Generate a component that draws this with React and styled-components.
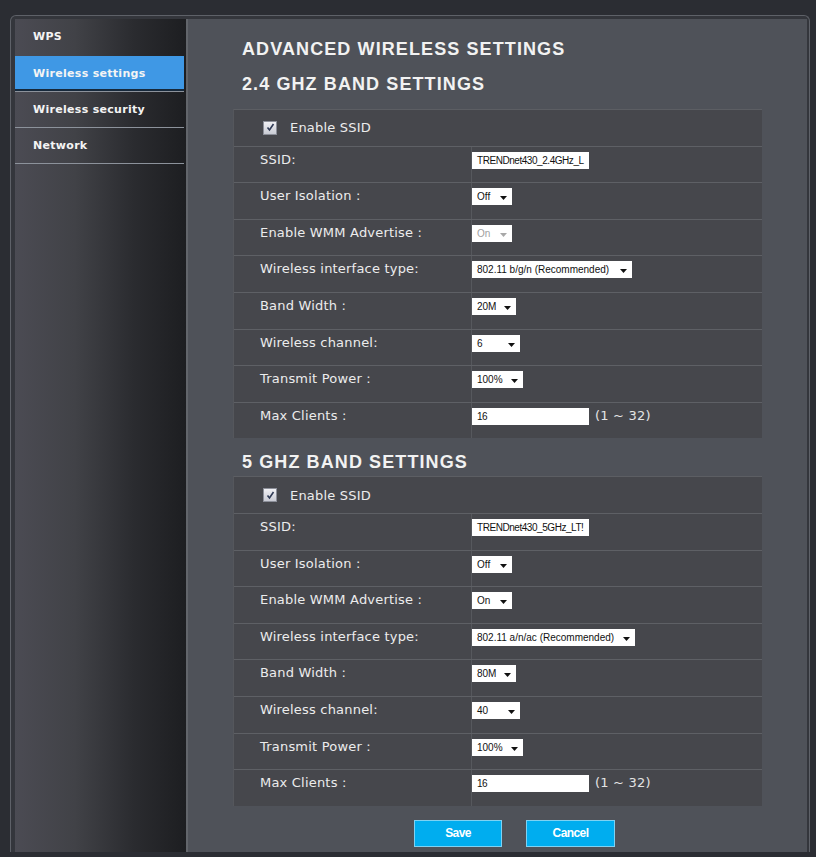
import React from 'react';
import styled, {createGlobalStyle} from "styled-components";

const GlobalStyle = createGlobalStyle`
    html, body {
        margin: 0;
        padding: 0;
        background: #2b2d33;
    }
    body {
        font-family: "DejaVu Sans", Verdana, sans-serif;
    }
`

const Page = styled.div`
    min-height: 857px;
    padding-top: 15px;
    padding-left: 10px;
    box-sizing: border-box;
`

const Frame = styled.div`
    width: 800px;
    box-sizing: border-box;
    display: flex;
    border: 1px solid #5e6168;
    border-bottom: none;
    border-radius: 6px 6px 0 0;
    padding: 3px 2px 0 4px;
    background: #34363c;
`

const Sidebar = styled.nav`
    width: 171px;
    flex-shrink: 0;
    background: linear-gradient(to right, #4b4b53 0%, #414247 35%, #2a2b2f 70%, #1d1e21 100%);
    ul {
        list-style: none;
        margin: 0;
        padding: 0;
    }
`

const SideItem = styled.li`
    display: flex;
    align-items: center;
    box-sizing: border-box;
    height: ${p => p.first ? '37px' : '36px'};
    padding: ${p => p.first ? '0 0 2px 18px' : '0 0 0 18px'};
    font-size: 11px;
    font-weight: bold;
    letter-spacing: 0.3px;
    color: #f4f4f4;
    border-bottom: ${p => p.first ? 'none' : '1px solid #8c929b'};
    margin-right: 2px;
    background: ${p => p.active ? '#3f98e5' : 'transparent'};
    box-shadow: ${p => p.active ? 'inset 0 -2px 0 #17293b' : 'none'};
`

const Main = styled.main`
    flex: 1;
    background: #4f5259;
    border-left: 2px solid #62656b;
    padding: 20px 0 5px 45px;
`

const Heading = styled.h2`
    margin: ${p => p.gap || 0}px 0 0 9px;
    font-family: "Liberation Sans", Arial, sans-serif;
    font-size: 18px;
    line-height: 20px;
    font-weight: bold;
    letter-spacing: 1.1px;
    color: #f2f2f2;
`

const Table = styled.div`
    width: 528px;
    margin-top: ${p => p.gap || 0}px;
    border-top: 1px solid #5c5e63;
    border-left: 1px solid #55575c;
    background: #46474c;
`

const Row = styled.div`
    display: grid;
    grid-template-columns: 237px 1fr;
    min-height: 35.6px;
    border-top: ${p => p.first ? 'none' : '1px solid #5e6065'};
`

const Label = styled.div`
    padding: 5px 0 0 26px;
    font-size: 13px;
    line-height: 16px;
    letter-spacing: 0.2px;
    color: #ececec;
`

const Value = styled.div`
    display: flex;
    align-items: flex-start;
    gap: 6px;
    padding: 5px 0 0 0;
    border-left: 1px solid #56585d;
`

const CheckRow = styled.label`
    grid-column: 1 / 3;
    display: flex;
    align-items: center;
    gap: 13px;
    height: 35.6px;
    padding-left: 29px;
    font-size: 13px;
    letter-spacing: 0.2px;
    color: #ececec;
`

const CheckBox = styled.span`
    width: 12px;
    height: 12px;
    border: 1px solid #8c8f99;
    background: linear-gradient(#f0f0f4, #c9cbd4);
    display: flex;
    align-items: center;
    justify-content: center;
`

const TextBox = styled.div`
    width: ${p => p.w}px;
    height: 17px;
    box-sizing: border-box;
    background: #fff;
    padding: 0 3px 0 5px;
    font-family: "Liberation Sans", Arial, sans-serif;
    font-size: 10px;
    letter-spacing: -0.45px;
    line-height: 17px;
    color: #111;
    white-space: nowrap;
`

const Dropdown = styled.div`
    width: ${p => p.w}px;
    height: 17px;
    box-sizing: border-box;
    display: flex;
    align-items: center;
    justify-content: space-between;
    padding: 0 5px 0 5px;
    background: #fff;
    font-family: "Liberation Sans", Arial, sans-serif;
    font-size: 10px;
    color: ${p => p.disabled ? '#a0a0a0' : '#111'};
    svg {
        fill: ${p => p.disabled ? '#a8a8a8' : '#111'};
        margin-top: 3px;
    }
`

const Hint = styled.span`
    font-size: 13px;
    line-height: 16px;
    letter-spacing: 0.2px;
    color: #e4e4e4;
`

const Buttons = styled.div`
    display: flex;
    gap: 24px;
    margin: 14px 0 0 181px;
`

const Button = styled.button`
    width: ${p => p.w}px;
    height: 27px;
    background: #00adef;
    border: 1px solid #7ed2f3;
    color: #fff;
    font-family: "Liberation Sans", Arial, sans-serif;
    font-size: 12px;
    font-weight: bold;
    letter-spacing: -0.6px;
    padding: 0;
`

const Caret = () => (
    <svg width="7" height="4" viewBox="0 0 7 4"><path d="M0 0h7L3.5 4z"/></svg>
)

const Check = () => (
    <svg width="9" height="9" viewBox="0 0 9 9">
        <path d="M1.5 4.5l2 2.5L7.5 1" fill="none" stroke="#2f3a55" strokeWidth="1.6"/>
    </svg>
)

const band24 = [
    {label: 'SSID:', text: 'TRENDnet430_2.4GHz_L', w: 117},
    {label: 'User Isolation :', select: 'Off', w: 40},
    {label: 'Enable WMM Advertise :', select: 'On', w: 40, disabled: true},
    {label: 'Wireless interface type:', select: '802.11 b/g/n (Recommended)', w: 160},
    {label: 'Band Width :', select: '20M', w: 44},
    {label: 'Wireless channel:', select: '6', w: 48},
    {label: 'Transmit Power :', select: '100%', w: 51},
    {label: 'Max Clients :', text: '16', w: 117, hint: '(1 ~ 32)'},
]

const band5 = [
    {label: 'SSID:', text: 'TRENDnet430_5GHz_LT!', w: 117},
    {label: 'User Isolation :', select: 'Off', w: 40},
    {label: 'Enable WMM Advertise :', select: 'On', w: 40},
    {label: 'Wireless interface type:', select: '802.11 a/n/ac (Recommended)', w: 163},
    {label: 'Band Width :', select: '80M', w: 44},
    {label: 'Wireless channel:', select: '40', w: 48},
    {label: 'Transmit Power :', select: '100%', w: 51},
    {label: 'Max Clients :', text: '16', w: 117, hint: '(1 ~ 32)'},
]

const BandTable = ({rows, gap}) => (
    <Table gap={gap}>
        <Row first>
            <CheckRow>
                <CheckBox><Check/></CheckBox>
                Enable SSID
            </CheckRow>
        </Row>
        {rows.map(r =>
            <Row key={r.label}>
                <Label>{r.label}</Label>
                <Value>
                    {r.text !== undefined
                        ? <TextBox w={r.w}>{r.text}</TextBox>
                        : <Dropdown w={r.w} disabled={r.disabled}>{r.select}<Caret/></Dropdown>}
                    {r.hint && <Hint>{r.hint}</Hint>}
                </Value>
            </Row>
        )}
    </Table>
)

const menu = ['WPS', 'Wireless settings', 'Wireless security', 'Network']

const App = () => {
    return (
        <Page>
            <GlobalStyle/>
            <Frame>
                <Sidebar>
                    <ul>
                        {menu.map((m, i) =>
                            <SideItem key={m} first={i === 0} active={m === 'Wireless settings'}>{m}</SideItem>
                        )}
                    </ul>
                </Sidebar>
                <Main>
                    <Heading>ADVANCED WIRELESS SETTINGS</Heading>
                    <Heading gap={15}>2.4 GHZ BAND SETTINGS</Heading>
                    <BandTable rows={band24} gap={15}/>
                    <Heading gap={14}>5 GHZ BAND SETTINGS</Heading>
                    <BandTable rows={band5} gap={4}/>
                    <Buttons>
                        <Button w={88}>Save</Button>
                        <Button w={89}>Cancel</Button>
                    </Buttons>
                </Main>
            </Frame>
        </Page>
    )
}

export default App
